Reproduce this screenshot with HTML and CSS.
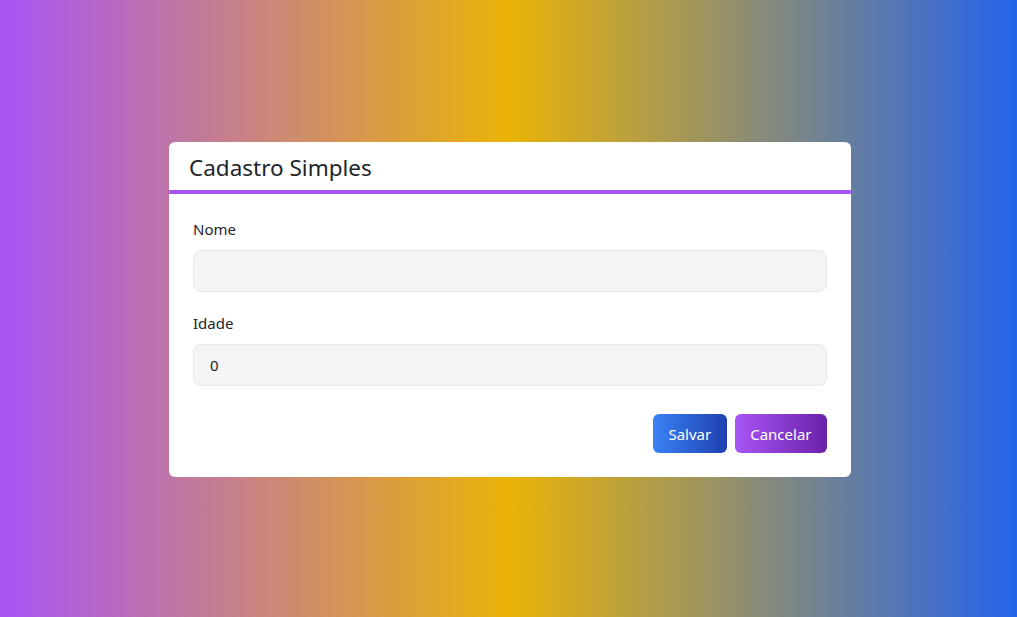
FILE: index.html
```html
<!DOCTYPE html>
<html lang="pt-BR">
<head>
<meta charset="utf-8">
<title>Cadastro Simples</title>
<link rel="stylesheet" href="styles.css">
</head>
<body>
<main class="page">
  <section class="card">
    <header class="card-header">
      <h1 class="card-title">Cadastro Simples</h1>
    </header>
    <form class="card-body">
      <div class="field">
        <label class="field-label" for="nome">Nome</label>
        <input class="field-input" id="nome" type="text" value="">
      </div>
      <div class="field">
        <label class="field-label" for="idade">Idade</label>
        <input class="field-input" id="idade" type="text" value="0">
      </div>
      <div class="actions">
        <button type="button" class="btn btn-save">Salvar</button>
        <button type="button" class="btn btn-cancel">Cancelar</button>
      </div>
    </form>
  </section>
</main>
</body>
</html>
```
FILE: styles.css
```css
* { box-sizing: border-box; }
html, body { margin: 0; padding: 0; }
body {
  font-family: "Noto Sans", "Open Sans", sans-serif;
  color: #1f2937;
}
.page {
  min-height: 617px;
  display: flex;
  align-items: center;
  justify-content: center;
  background: linear-gradient(to right, #a855f7 0%, #eab308 50%, #2563eb 100%);
  padding-left: 3px;
  padding-top: 2px;
}
.card {
  width: 682px;
  background: #fff;
  border-radius: 6px;
  overflow: hidden;
}
.card-header {
  height: 52px;
  padding: 2px 20px 0;
  display: flex;
  align-items: center;
  border-bottom: 4px solid #a855f7;
}
.card-title {
  margin: 0;
  font-size: 22.5px;
  font-weight: 400;
  color: #212529;
}
.card-body {
  padding: 24px 24px 24px;
  display: flex;
  flex-direction: column;
}
.field { display: flex; flex-direction: column; }
.field + .field { margin-top: 20px; }
.field-label {
  font-size: 15px;
  line-height: 22px;
  margin-bottom: 10px;
  color: #212529;
}
.field-input {
  height: 42px;
  border: 1px solid #e5e7eb;
  background: #f3f4f6;
  border-radius: 8px;
  padding: 0 16px;
  font: inherit;
  font-size: 15px;
  color: #212529;
  outline: none;
}
.actions {
  margin-top: 28px;
  display: flex;
  justify-content: flex-end;
  gap: 8px;
}
.btn {
  height: 39px;
  border: none;
  border-radius: 6px;
  padding: 0 15.5px;
  font: inherit;
  font-size: 15px;
  color: #fff;
  cursor: pointer;
}
.btn-save { background: linear-gradient(to right, #3b82f6, #1e40af); }
.btn-cancel { background: linear-gradient(to right, #a855f7, #6b21a8); }
```
